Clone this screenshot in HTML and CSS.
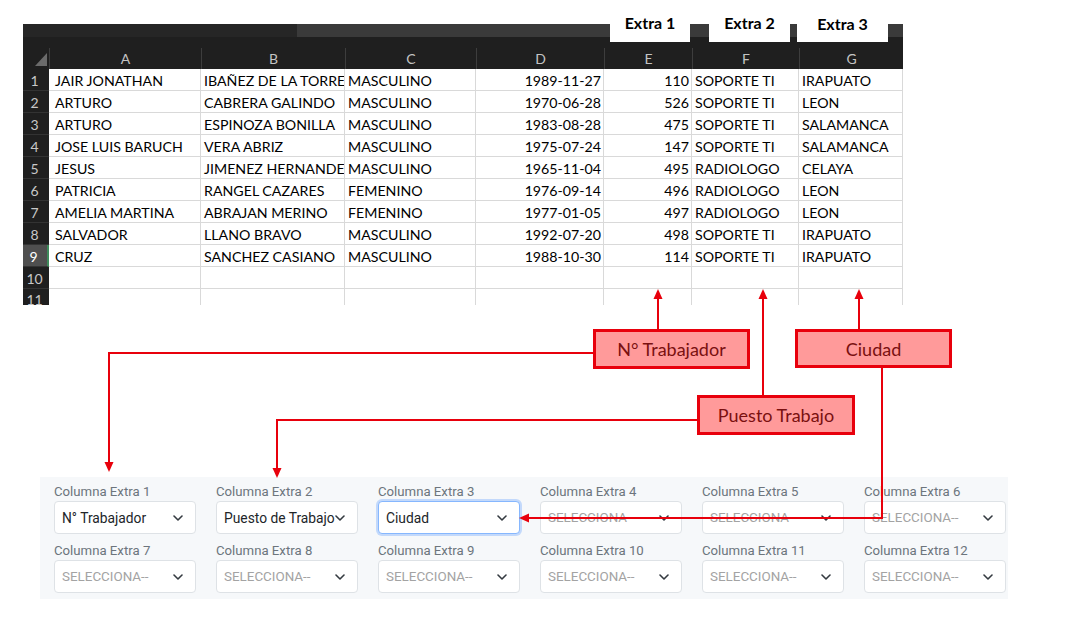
FILE: index.html
```html
<!DOCTYPE html>
<html lang="es">
<head>
<meta charset="utf-8">
<title>Columnas extra</title>
<link rel="stylesheet" href="styles.css">
</head>
<body>
<div class="page">
  <div class="sheet">
    <div class="sheet-bar"><div class="bar-left"></div><div class="bar-right"></div></div>
    <div class="grid-row col-head">
      <div class="corner"><span class="tri"></span></div>
      <div>A</div><div>B</div><div>C</div><div>D</div><div>E</div><div>F</div><div>G</div>
    </div>
    <div class="grid-row data"><div class="rh">1</div><div class="c a">JAIR JONATHAN</div><div class="c">IBAÑEZ DE LA TORRE</div><div class="c">MASCULINO</div><div class="c num">1989-11-27</div><div class="c num">110</div><div class="c">SOPORTE TI</div><div class="c">IRAPUATO</div></div>
    <div class="grid-row data"><div class="rh">2</div><div class="c a">ARTURO</div><div class="c">CABRERA GALINDO</div><div class="c">MASCULINO</div><div class="c num">1970-06-28</div><div class="c num">526</div><div class="c">SOPORTE TI</div><div class="c">LEON</div></div>
    <div class="grid-row data"><div class="rh">3</div><div class="c a">ARTURO</div><div class="c">ESPINOZA BONILLA</div><div class="c">MASCULINO</div><div class="c num">1983-08-28</div><div class="c num">475</div><div class="c">SOPORTE TI</div><div class="c">SALAMANCA</div></div>
    <div class="grid-row data"><div class="rh">4</div><div class="c a">JOSE LUIS BARUCH</div><div class="c">VERA ABRIZ</div><div class="c">MASCULINO</div><div class="c num">1975-07-24</div><div class="c num">147</div><div class="c">SOPORTE TI</div><div class="c">SALAMANCA</div></div>
    <div class="grid-row data"><div class="rh">5</div><div class="c a">JESUS</div><div class="c">JIMENEZ HERNANDEZ</div><div class="c">MASCULINO</div><div class="c num">1965-11-04</div><div class="c num">495</div><div class="c">RADIOLOGO</div><div class="c">CELAYA</div></div>
    <div class="grid-row data"><div class="rh">6</div><div class="c a">PATRICIA</div><div class="c">RANGEL CAZARES</div><div class="c">FEMENINO</div><div class="c num">1976-09-14</div><div class="c num">496</div><div class="c">RADIOLOGO</div><div class="c">LEON</div></div>
    <div class="grid-row data"><div class="rh">7</div><div class="c a">AMELIA MARTINA</div><div class="c">ABRAJAN MERINO</div><div class="c">FEMENINO</div><div class="c num">1977-01-05</div><div class="c num">497</div><div class="c">RADIOLOGO</div><div class="c">LEON</div></div>
    <div class="grid-row data"><div class="rh">8</div><div class="c a">SALVADOR</div><div class="c">LLANO BRAVO</div><div class="c">MASCULINO</div><div class="c num">1992-07-20</div><div class="c num">498</div><div class="c">SOPORTE TI</div><div class="c">IRAPUATO</div></div>
    <div class="grid-row data"><div class="rh sel">9</div><div class="c a">CRUZ</div><div class="c">SANCHEZ CASIANO</div><div class="c">MASCULINO</div><div class="c num">1988-10-30</div><div class="c num">114</div><div class="c">SOPORTE TI</div><div class="c">IRAPUATO</div></div>
    <div class="grid-row data"><div class="rh">10</div><div class="c a"></div><div class="c"></div><div class="c"></div><div class="c"></div><div class="c"></div><div class="c"></div><div class="c"></div></div>
    <div class="grid-row data last"><div class="rh">11</div><div class="c a"></div><div class="c"></div><div class="c"></div><div class="c"></div><div class="c"></div><div class="c"></div><div class="c"></div></div>
  </div>

  <form class="extras">
    <div class="field"><label>Columna Extra 1</label><div class="select"><span>N° Trabajador</span><svg class="chev" viewBox="0 0 10 6"><path d="M1 1l4 4 4-4"/></svg></div></div>
    <div class="field"><label>Columna Extra 2</label><div class="select"><span>Puesto de Trabajo</span><svg class="chev" viewBox="0 0 10 6"><path d="M1 1l4 4 4-4"/></svg></div></div>
    <div class="field"><label>Columna Extra 3</label><div class="select focus"><span>Ciudad</span><svg class="chev" viewBox="0 0 10 6"><path d="M1 1l4 4 4-4"/></svg></div></div>
    <div class="field"><label>Columna Extra 4</label><div class="select empty"><span>SELECCIONA--</span><svg class="chev" viewBox="0 0 10 6"><path d="M1 1l4 4 4-4"/></svg></div></div>
    <div class="field"><label>Columna Extra 5</label><div class="select empty"><span>SELECCIONA--</span><svg class="chev" viewBox="0 0 10 6"><path d="M1 1l4 4 4-4"/></svg></div></div>
    <div class="field"><label>Columna Extra 6</label><div class="select empty"><span>SELECCIONA--</span><svg class="chev" viewBox="0 0 10 6"><path d="M1 1l4 4 4-4"/></svg></div></div>
    <div class="field"><label>Columna Extra 7</label><div class="select empty"><span>SELECCIONA--</span><svg class="chev" viewBox="0 0 10 6"><path d="M1 1l4 4 4-4"/></svg></div></div>
    <div class="field"><label>Columna Extra 8</label><div class="select empty"><span>SELECCIONA--</span><svg class="chev" viewBox="0 0 10 6"><path d="M1 1l4 4 4-4"/></svg></div></div>
    <div class="field"><label>Columna Extra 9</label><div class="select empty"><span>SELECCIONA--</span><svg class="chev" viewBox="0 0 10 6"><path d="M1 1l4 4 4-4"/></svg></div></div>
    <div class="field"><label>Columna Extra 10</label><div class="select empty"><span>SELECCIONA--</span><svg class="chev" viewBox="0 0 10 6"><path d="M1 1l4 4 4-4"/></svg></div></div>
    <div class="field"><label>Columna Extra 11</label><div class="select empty"><span>SELECCIONA--</span><svg class="chev" viewBox="0 0 10 6"><path d="M1 1l4 4 4-4"/></svg></div></div>
    <div class="field"><label>Columna Extra 12</label><div class="select empty"><span>SELECCIONA--</span><svg class="chev" viewBox="0 0 10 6"><path d="M1 1l4 4 4-4"/></svg></div></div>
  </form>

  <div class="tab tab1">Extra 1</div>
  <div class="tab tab2">Extra 2</div>
  <div class="tab tab3">Extra 3</div>

  <svg class="arrows" width="1081" height="622" viewBox="0 0 1081 622">
    <g stroke="#e8000c" stroke-width="2" fill="none">
      <path d="M658 298V330"/>
      <path d="M763 298V395"/>
      <path d="M859 298V330"/>
      <path d="M593 353H109V463"/>
      <path d="M697 420H277V469"/>
      <path d="M882 368V518H528"/>
    </g>
    <g fill="#e8000c">
      <polygon points="658,289 653.5,299 662.5,299"/>
      <polygon points="763,289 758.5,299 767.5,299"/>
      <polygon points="859,289 854.5,299 863.5,299"/>
      <polygon points="109,472 104.5,462 113.5,462"/>
      <polygon points="277,478 272.5,468 281.5,468"/>
      <polygon points="519,518 529,513.5 529,522.5"/>
    </g>
  </svg>

  <div class="note note-num">N° Trabajador</div>
  <div class="note note-city">Ciudad</div>
  <div class="note note-job">Puesto Trabajo</div>
</div>
</body>
</html>
```

FILE: styles.css
```css
* { box-sizing: border-box; }
html, body { margin: 0; padding: 0; background: #fff; }
.page {
  position: relative;
  width: 1081px;
  height: 622px;
  overflow: hidden;
  font-family: Lato, "Liberation Sans", sans-serif;
}

/* spreadsheet */
.sheet {
  margin: 24px 0 0 23px;
  width: 880px;
  height: 281px;
  overflow: hidden;
  background: #1f1f1f;
}
.sheet-bar { display: flex; height: 13px; }
.bar-left { width: 274px; background: #262626; }
.bar-right { flex: 1; background: #3a3a3a; }

.grid-row {
  display: grid;
  grid-template-columns: 26px 152px 144px 131px 128px 88px 107px 104px;
}
.col-head {
  margin-top: 11px;
  height: 21px;
  color: #c4c4c4;
  font-size: 14px;
  line-height: 21px;
  text-align: center;
  background: #1f1f1f;
}
.col-head > div { border-left: 1px solid #3d3d3d; }
.col-head > .corner { border-left: none; position: relative; }
.tri {
  position: absolute;
  right: 2px;
  bottom: 3px;
  width: 12px;
  height: 13px;
  background: #6b6b6b;
  clip-path: polygon(100% 0, 100% 100%, 0 100%);
}

.data {
  height: 22px;
  grid-template-rows: 22px;
  font-size: 14.2px;
  line-height: 18px;
  color: #000;
}
.rh {
  height: 22px;
  background: #1f1f1f;
  color: #c8c8c8;
  text-align: center;
  padding: 3px 3px 0 0;
  border-bottom: 1px solid #333;
  font-size: 14px;
  overflow: hidden;
}
.last .rh { padding-top: 2px; }
.rh.sel { background: #4f4f4f; color: #fff; border-right: 2px solid #3d8a5a; }
.c {
  height: 22px;
  background: #fff;
  border-right: 1px solid #d9d9d9;
  border-bottom: 1px solid #d9d9d9;
  padding: 3px 3px 0;
  white-space: nowrap;
  overflow: hidden;
}
.c.a { padding-left: 6px; }
.c.num { text-align: right; padding-right: 2px; }

/* tabs overlay */
.tab {
  position: absolute;
  top: 10px;
  height: 32px;
  background: #fff;
  font-weight: 700;
  font-size: 16px;
  line-height: 18px;
  padding-top: 4px;
  text-align: center;
  color: #000;
}
.tab1 { left: 610px; width: 80px; }
.tab2 { left: 709px; width: 81px; }
.tab3 { left: 797px; width: 91px; padding-top: 5px; }

/* form panel */
.extras {
  margin: 172px 0 0 40px;
  width: 968px;
  padding: 5px 2px 6px 14px;
  background: #f6f8fa;
  display: grid;
  grid-template-columns: repeat(6, 142px);
  column-gap: 20px;
  row-gap: 7px;
  font-family: Roboto, "Noto Sans", sans-serif;
}
.field label {
  display: block;
  font-size: 13.2px;
  line-height: 19px;
  color: #6c757d;
}
.select {
  height: 33px;
  background: #fff;
  border: 1px solid #dee2e6;
  border-radius: 4px;
  display: flex;
  align-items: center;
  padding: 0 12px 0 7px;
  font-size: 13.8px;
  color: #212529;
  position: relative;
}
.select span { flex: 1; white-space: nowrap; overflow: hidden; }
.select.empty { color: #a3a3a3; font-size: 13.4px; }
.select.focus {
  border-color: #86b7fe;
  box-shadow: 0 0 0 2px rgba(13, 110, 253, 0.22);
}
.chev {
  width: 10px;
  height: 6px;
  flex: none;
  fill: none;
  stroke: #343a40;
  stroke-width: 1.6;
  stroke-linecap: round;
  stroke-linejoin: round;
}

/* diagram overlay */
.arrows { position: absolute; left: 0; top: 0; pointer-events: none; }
.note {
  position: absolute;
  background: #ff9a9a;
  border: 3px solid #e8000c;
  color: #7a1010;
  font-size: 18px;
  display: flex;
  align-items: center;
  justify-content: center;
}
.note-num { left: 593px; top: 329px; width: 157px; height: 40px; }
.note-city { left: 795px; top: 329px; width: 157px; height: 39px; }
.note-job { left: 697px; top: 395px; width: 158px; height: 40px; }
```
